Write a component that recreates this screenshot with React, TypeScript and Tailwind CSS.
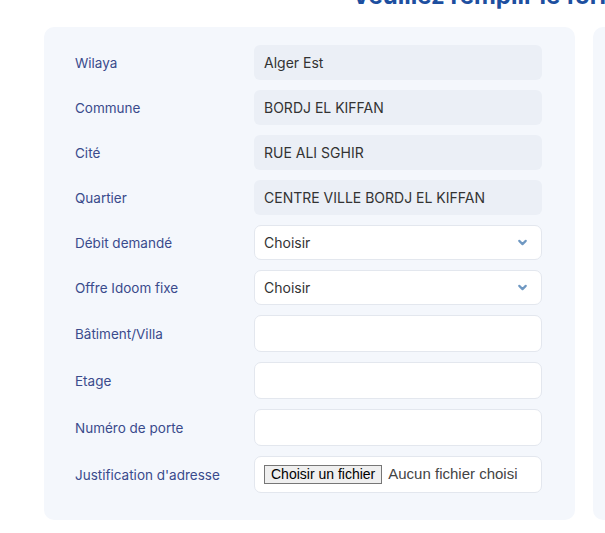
import { ChevronDown } from "lucide-react";

const readOnly = [
  { label: "Wilaya", value: "Alger Est" },
  { label: "Commune", value: "BORDJ EL KIFFAN" },
  { label: "Cité", value: "RUE ALI SGHIR" },
  { label: "Quartier", value: "CENTRE VILLE BORDJ EL KIFFAN" },
];

const selects = ["Débit demandé", "Offre Idoom fixe"];
const texts = ["Bâtiment/Villa", "Etage", "Numéro de porte"];

export default function App() {
  return (
    <div className="min-h-screen bg-white font-['Inter',sans-serif] text-[14px] overflow-hidden">
      <h2 className="-mt-[17px] h-[44px] pl-[352px] whitespace-nowrap text-[24px] font-bold leading-[25px] text-[#1d4f9f]">
        Veuillez remplir le formulaire
      </h2>

      <div className="flex gap-[18px] pl-[44px]">
        <div className="w-[531px] shrink-0 rounded-[10px] bg-[#f4f7fc] pl-[31px] pr-[33px] pt-[18px] pb-[27px]">
          <div className="flex flex-col gap-[10px]">
            {readOnly.map((r) => (
              <div key={r.label} className="flex items-center">
                <label className="w-[179px] shrink-0 pt-[2px] text-[13.5px] text-[#3a4b8c]">{r.label}</label>
                <div className="flex h-[35px] flex-1 items-center rounded-[6px] bg-[#ebeff6] px-[10px] text-[#333]">
                  {r.value}
                </div>
              </div>
            ))}
            {selects.map((s) => (
              <div key={s} className="flex items-center">
                <label className="w-[179px] shrink-0 pt-[2px] text-[13.5px] text-[#3a4b8c]">{s}</label>
                <div className="flex h-[35px] flex-1 items-center justify-between rounded-[7px] border border-[#e3e7ee] bg-white pl-[9px] pr-[12px] text-[#333]">
                  <span>Choisir</span>
                  <ChevronDown className="h-[13px] w-[13px] text-[#6f98c2]" strokeWidth={4} />
                </div>
              </div>
            ))}
            {texts.map((t) => (
              <div key={t} className="flex items-center">
                <label className="w-[179px] shrink-0 pt-[2px] text-[13.5px] text-[#3a4b8c]">{t}</label>
                <div className="h-[37px] flex-1 rounded-[7px] border border-[#e3e7ee] bg-white" />
              </div>
            ))}
            <div className="flex items-center">
              <label className="w-[179px] shrink-0 pt-[2px] text-[13.5px] text-[#3a4b8c]">Justification d'adresse</label>
              <div className="flex h-[37px] flex-1 items-center gap-[6px] rounded-[7px] border border-[#e3e7ee] bg-white px-[9px] font-['Liberation_Sans',sans-serif]">
                <span className="border border-[#767676] bg-[#efefef] px-[6px] text-[14px] leading-[17px] text-black">
                  Choisir un fichier
                </span>
                <span className="text-[15px] text-[#444]">Aucun fichier choisi</span>
              </div>
            </div>
          </div>
        </div>
        <div className="w-[100px] shrink-0 rounded-[10px] bg-[#f4f7fc]" />
      </div>
    </div>
  );
}
